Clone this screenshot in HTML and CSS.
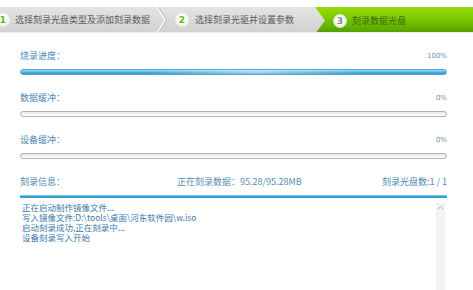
FILE: index.html
```html
<!DOCTYPE html>
<html>
<head>
<meta charset="utf-8">
<link rel="stylesheet" href="styles.css">
</head>
<body>
<div class="steps">
  <div class="step step1">
    <span class="num">1</span>
    <span class="stxt">选择刻录光盘类型及添加刻录数据</span>
  </div>
  <svg class="chev" width="14" height="26" viewBox="0 0 14 26"><polyline points="2,0 10,13 2,26" fill="none" stroke="#c4c4c4" stroke-width="2"/><polyline points="1,0 9,13 1,26" fill="none" stroke="#f6f6f6" stroke-width="1.5"/></svg>
  <div class="step step2">
    <span class="num">2</span>
    <span class="stxt">选择刻录光驱并设置参数</span>
  </div>
  <div class="step step3">
    <span class="num num3">3</span>
    <span class="stxt">刻录数据光盘</span>
  </div>
</div>

<div class="main">
  <div class="group">
    <div class="line"><span>烧录进度：</span><span class="pct">100%</span></div>
    <div class="bar full"></div>
  </div>
  <div class="group">
    <div class="line"><span>数据缓冲：</span><span class="pct">0%</span></div>
    <div class="bar"></div>
  </div>
  <div class="group">
    <div class="line"><span>设备缓冲：</span><span class="pct">0%</span></div>
    <div class="bar"></div>
  </div>
  <div class="line info">
    <span class="info-l">刻录信息：</span>
    <span class="info-m">正在刻录数据：95.28/95.28MB</span>
    <span class="info-r">刻录光盘数:1 / 1</span>
  </div>
  <div class="log">
    <div class="logtext">
      <div>正在启动制作镜像文件...</div>
      <div>写入镜像文件:D:\tools\桌面\河东软件园\w.iso</div>
      <div>启动刻录成功,正在刻录中...</div>
      <div>设备刻录写入开始</div>
    </div>
    <div class="scroll"><svg width="9" height="6" viewBox="0 0 9 6"><polyline points="2,4 4.5,1.5 7,4" fill="none" stroke="#b0b0b0" stroke-width="1"/></svg></div>
  </div>
</div>
</body>
</html>
```
FILE: styles.css
```css
* { box-sizing: border-box; }
html, body { margin: 0; padding: 0; background: #fff; }
body {
  width: 473px;
  height: 290px;
  overflow: hidden;
  font-family: "Liberation Sans", "Noto Sans CJK SC", sans-serif;
  font-size: 9px;
}
.steps {
  margin-top: 7px;
  height: 26px;
  display: flex;
  align-items: center;
  background: linear-gradient(to bottom, #e4e4e4, #d8d8d8 60%, #d2d2d2);
  border-bottom: 1px solid #ececec;
  overflow: hidden;
}
.step {
  display: flex;
  align-items: center;
  height: 26px;
  color: #5a5a5a;
  font-family: "Noto Sans CJK SC", sans-serif;
  font-size: 9px;
}
.num {
  width: 14px;
  height: 14px;
  border-radius: 50%;
  background: radial-gradient(circle at 50% 40%, #ffffff 30%, #e8f3d8 70%, #c9d6bb 100%);
  color: #69b21a;
  font-weight: bold;
  font-family: "DejaVu Sans", sans-serif;
  font-size: 9px;
  display: flex;
  align-items: center;
  justify-content: center;
  flex: none;
}
.step1 { margin-left: -4px; width: 160px; }
.step1 .stxt { margin-left: 5px; }
.chev { flex: none; margin-left: 0; }
.step2 { margin-left: 5px; width: 140px; }
.step2 .stxt { margin-left: 6px; }
.step3 {
  flex: 1;
  height: 27px;
  align-self: flex-start;
  background: linear-gradient(to bottom, #94dc04, #7ecb00 40%, #5aa800 85%, #4f9600);
  clip-path: polygon(0 0, 100% 0, 100% 100%, 0 100%, 10px 50%);
  padding-left: 18px;
  color: #3a6a0c;
}
.num3 {
  background: radial-gradient(circle at 50% 40%, #ffffff 40%, #e6e6e6 80%, #b8b8b8 100%);
  color: #8a8a7a;
  border: 1px solid #d8e8c8;
}
.step3 .stxt { margin-left: 5px; }

.main {
  padding: 17px 26px 0 20px;
}
.group { margin-bottom: 17px; }
.line {
  display: flex;
  justify-content: space-between;
  height: 12px;
  line-height: 12px;
  color: #4d88b4;
  font-family: "Noto Sans CJK SC", sans-serif;
  font-size: 9px;
}
.pct {
  color: #6c8ea8;
  font-family: "DejaVu Sans", sans-serif;
  font-size: 7px;
}
.bar {
  margin-top: 7px;
  height: 6px;
  border: 1px solid #b3b3b3;
  border-radius: 3px;
  background: linear-gradient(to bottom, #e6e6e6, #ffffff);
}
.bar.full {
  border-color: #5aa6d0;
  background:
    linear-gradient(to right, rgba(255,255,255,0) 30%, rgba(255,255,255,.45) 55%, rgba(255,255,255,0) 80%),
    linear-gradient(to bottom, #a6dcf3, #4fb6e3 50%, #2e94c8);
}
.info { justify-content: flex-start; }
.info-l { width: 157px; }
.info-m { flex: 1; color: #5b8db2; }
.info-r { color: #4d88b4; }
.info-m, .info-r { font-size: 9px; }
.log {
  margin-top: 7px;
  border-top: 1px solid #7cc6ea;
  box-shadow: inset 0 1px 0 #2f9fd8, inset 0 2px 0 #2f9fd8;
  display: flex;
  height: 100px;
}
.logtext {
  flex: 1;
  padding: 6px 0 0 2px;
  color: #3a78aa;
  font-family: "Noto Sans CJK SC", sans-serif;
  font-size: 8.5px;
  line-height: 10px;
}
.scroll {
  margin-top: 7px;
  margin-right: 2px;
  width: 9px;
  background: #f2f2f2;
  display: flex;
  justify-content: center;
  align-items: flex-start;
  padding-top: 2px;
}
.scroll svg { display: block; }
```
